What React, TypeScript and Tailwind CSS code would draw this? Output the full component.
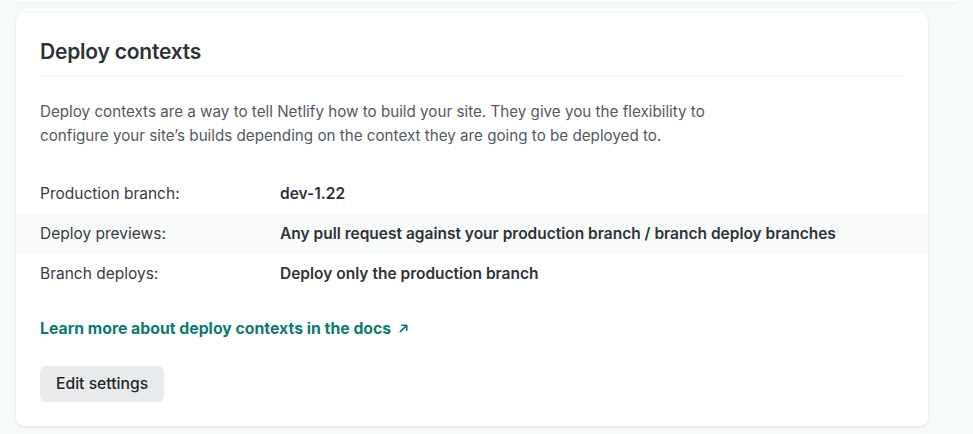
export default function App() {
  const rows = [
    { label: "Production branch:", value: "dev-1.22" },
    {
      label: "Deploy previews:",
      value: "Any pull request against your production branch / branch deploy branches",
    },
    { label: "Branch deploys:", value: "Deploy only the production branch" },
  ];

  return (
    <main className="min-h-screen bg-[#f6fafa] px-4 font-['Inter',sans-serif] text-[#2e3338]">
      <div className="h-[2px] w-full rounded-b-lg bg-white shadow-[0_1px_3px_rgba(0,0,0,0.06)]" />

      <section className="mt-[11px] w-[912px] rounded-lg bg-white pb-6 shadow-[0_1px_3px_rgba(0,0,0,0.12)]">
        <div className="px-6 pt-[25px]">
          <h2 className="border-b border-[#f3f4f4] pb-[9px] text-[21px] font-semibold leading-7 tracking-[-0.01em]">
            Deploy contexts
          </h2>
          <p className="mt-[24px] max-w-[690px] text-[15.2px] leading-6 text-[#545a61]">
            Deploy contexts are a way to tell Netlify how to build your site. They give you the
            flexibility to configure your site&rsquo;s builds depending on the context they are
            going to be deployed to.
          </p>
        </div>

        <dl className="mt-[26px]">
          {rows.map((row, i) => (
            <div
              key={row.label}
              className={`flex h-10 items-center px-6 text-[15.5px] ${i % 2 === 1 ? "bg-[#f9fafa]" : ""}`}
            >
              <dt className="w-[240px] text-[#373c41]">{row.label}</dt>
              <dd className="font-semibold">{row.value}</dd>
            </div>
          ))}
        </dl>

        <div className="px-6">
          <a href="#" className="mt-[23px] inline-flex items-center gap-[7px] text-[15.8px] font-bold text-[#0d7b6f]">
            Learn more about deploy contexts in the docs
            <svg width="11" height="11" viewBox="0 0 12 12" fill="none" stroke="currentColor" strokeWidth="1.8" strokeLinecap="round" strokeLinejoin="round">
              <path d="M2.5 9.5 9.5 2.5M4 2.5h5.5V8" />
            </svg>
          </a>
          <div className="mt-[25px]">
            <button className="h-9 rounded-md bg-[#e9eaec] px-4 text-[15.7px] font-medium text-[#22272b]">
              Edit settings
            </button>
          </div>
        </div>
      </section>
    </main>
  );
}
